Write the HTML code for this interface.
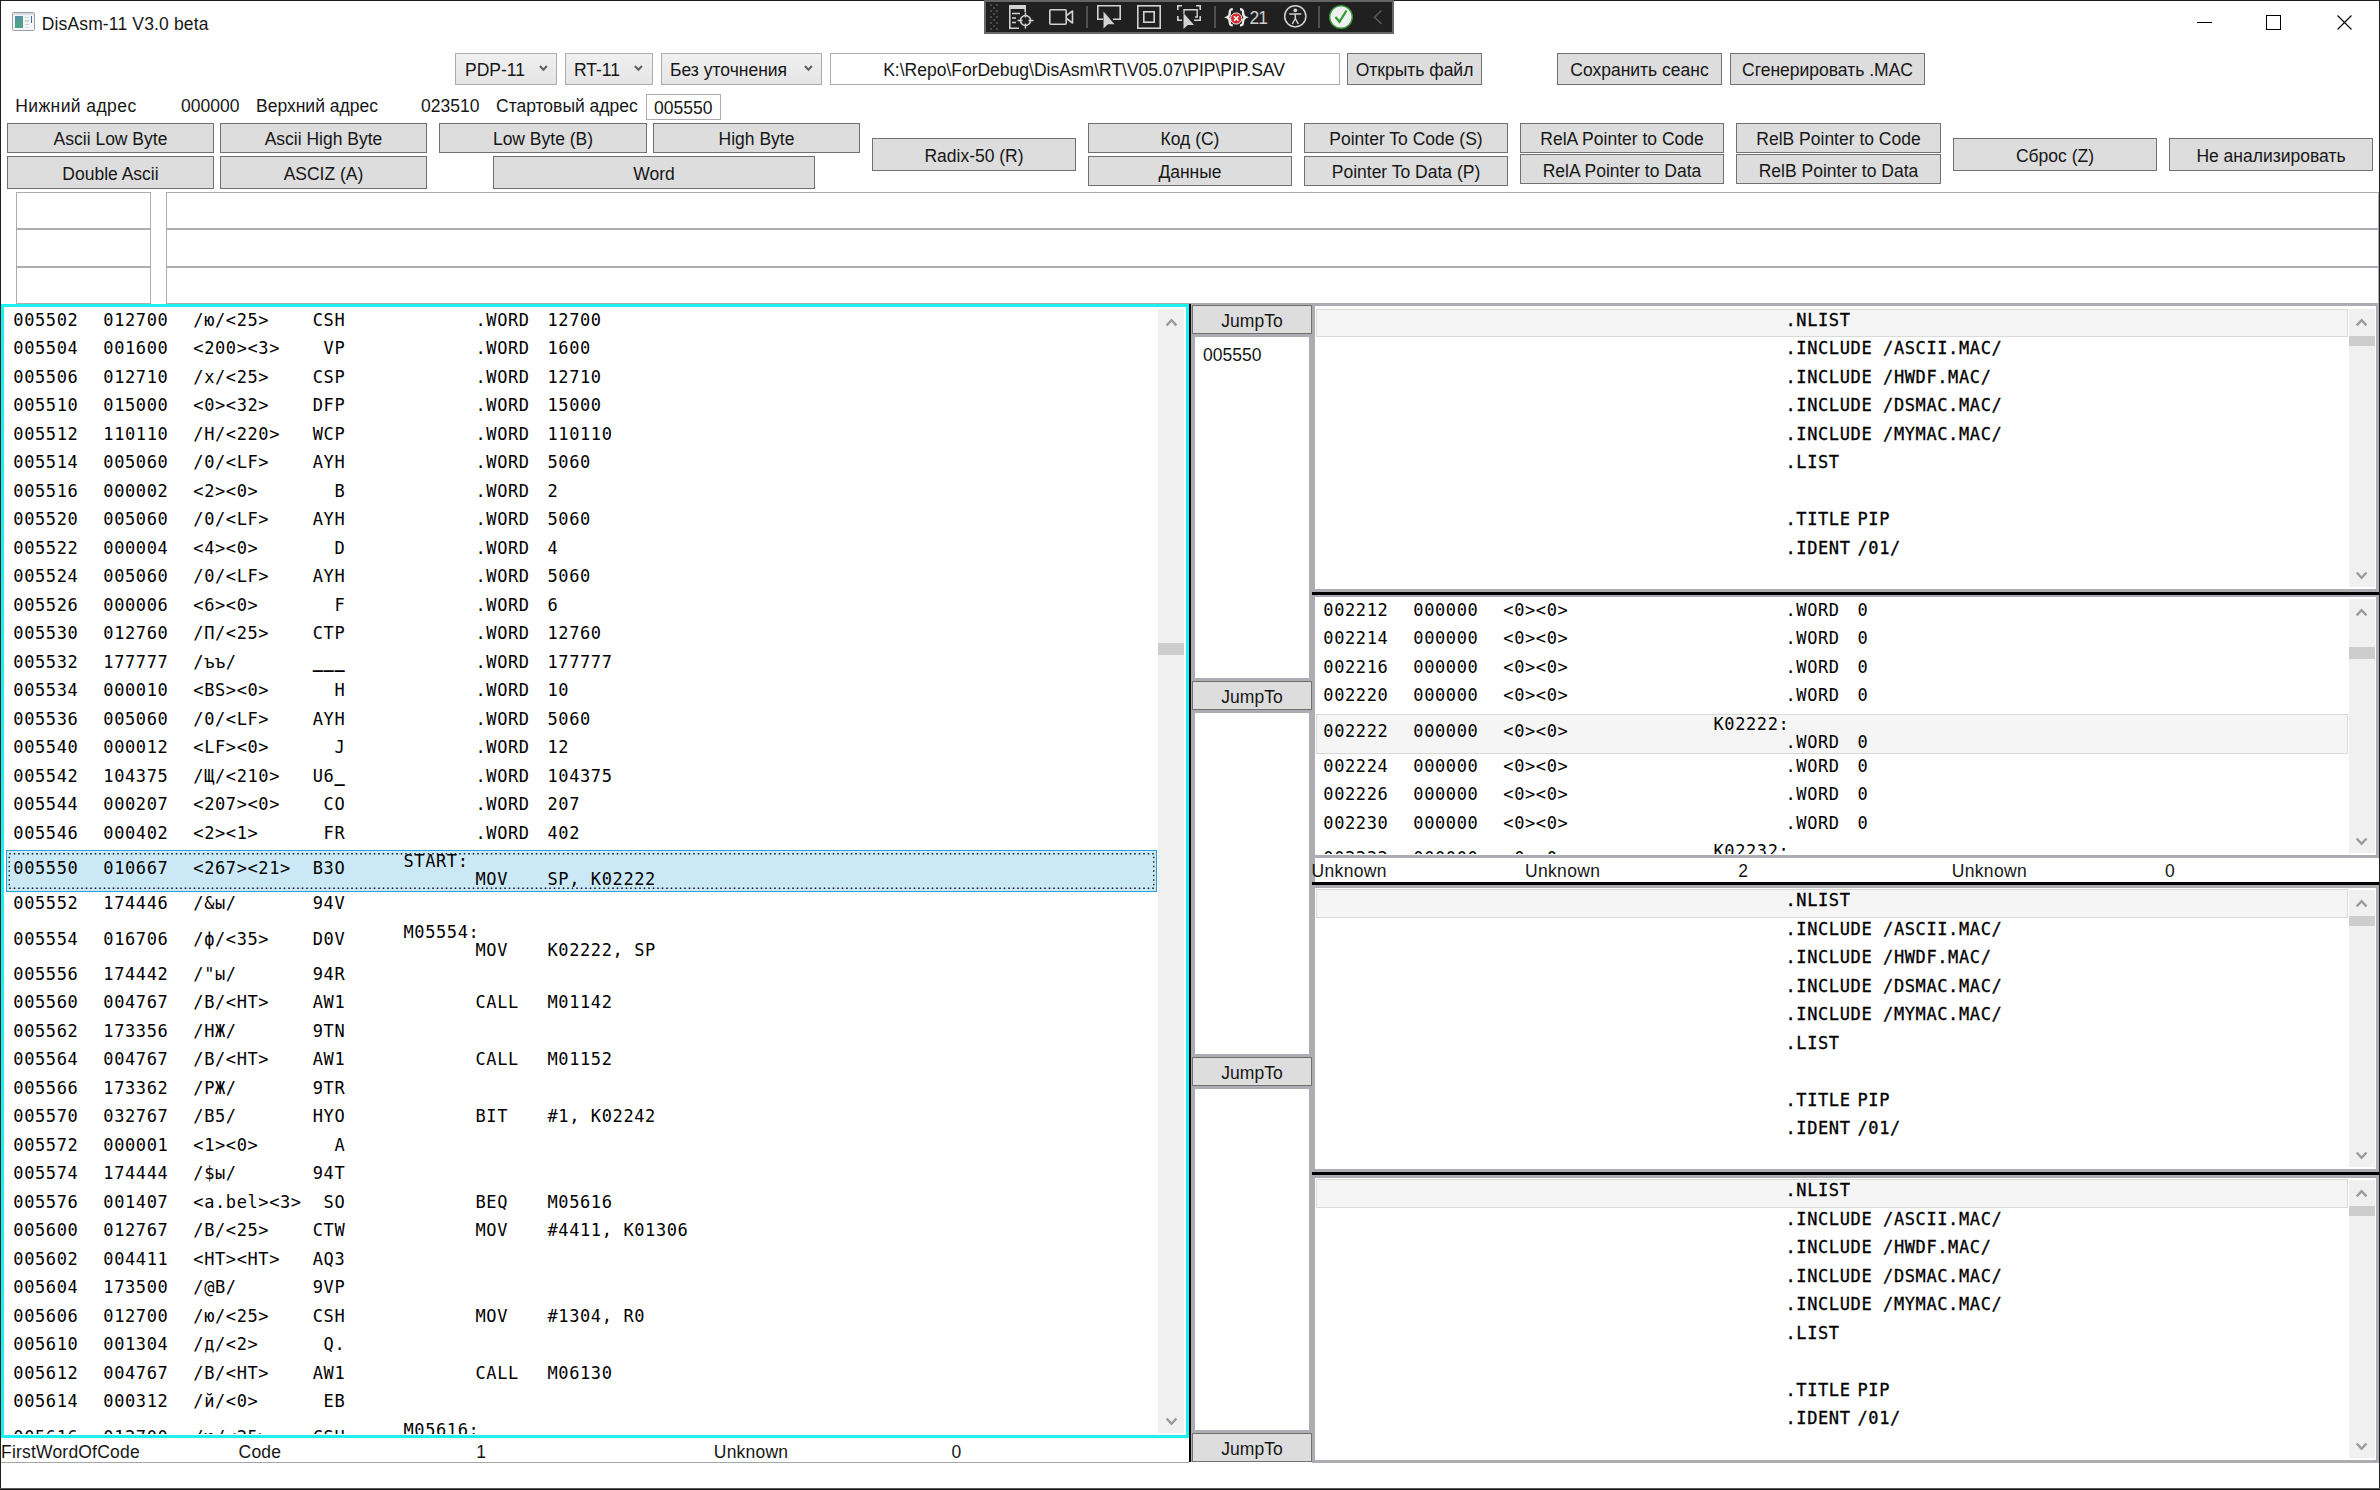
<!DOCTYPE html>
<html lang="ru"><head><meta charset="utf-8"><title>DisAsm-11 V3.0 beta</title>
<style>
html,body{margin:0;padding:0;overflow:hidden}
body{width:2380px;height:1490px;position:relative;overflow:hidden;background:#fff;font-family:"Liberation Sans",sans-serif;font-size:17.5px;color:#161616}
div,span{box-sizing:border-box}
.a{position:absolute}
.t{position:absolute;white-space:pre;line-height:20px;height:20px}
.m{color:#000;position:absolute;white-space:pre;line-height:20px;height:20px;font-family:"DejaVu Sans Mono","Liberation Mono",monospace;font-size:17px;letter-spacing:.606px}
.btn{position:absolute;border:1px solid #707070;background:#ddd;text-align:center;white-space:pre}
.btn span{position:absolute;left:0;right:0;line-height:20px;height:20px}
.tb{position:absolute;border:1px solid #abadb3;background:#fff}
.cb{position:absolute;border:1px solid #acacac;background:linear-gradient(#f0f0f0,#e5e5e5)}
.sb{position:absolute;background:#f0f0f0}
.th{position:absolute;background:#cdcdcd}
.g{position:absolute;background:#abadb3}
.k{position:absolute;background:#000}
.hl{position:absolute;background:#f5f5f5;border:1px solid #dadada}
svg{position:absolute;overflow:visible}
</style></head>
<body>
<div class="a" style="left:12px;top:12px;width:23px;height:19px;border:1px solid #9a9da1;border-radius:1.5px;background:#f4f5f6">
<div class="a" style="left:0;top:0;width:21px;height:2px;background:#d9dbde"></div>
<div class="a" style="left:1.5px;top:3px;width:8.5px;height:12px;background:linear-gradient(135deg,#5b86b4,#4f9f92 50%,#4fa279)"></div>
<div class="a" style="left:12px;top:3.5px;width:4px;height:1.5px;background:#d0d2d4"></div><div class="a" style="left:12px;top:7px;width:4px;height:1.5px;background:#d0d2d4"></div><div class="a" style="left:12px;top:10.5px;width:4px;height:1.5px;background:#d0d2d4"></div><div class="a" style="left:12px;top:13.5px;width:4px;height:1.5px;background:#dcdee0"></div>
<div class="a" style="left:17.5px;top:3px;width:1.5px;height:6.5px;background:#3f6fb0"></div>
</div>
<div class="t" style="left:41.7px;top:14px;letter-spacing:.15px">DisAsm-11 V3.0 beta</div>
<div class="k" style="left:2197px;top:22px;width:15px;height:1px;"></div>
<div class="a" style="left:2266px;top:15px;width:15px;height:15px;border:1px solid #000"></div>
<svg style="left:2337px;top:15px" width="15" height="15" viewBox="0 0 15 15"><path d="M0.5 0.5L14.5 14.5M14.5 0.5L0.5 14.5" stroke="#000" stroke-width="1.1" fill="none"/></svg>
<div class="a" style="left:984px;top:0;width:410px;height:34px;background:#202020;border:2px solid #686868;border-top-color:#5f5f5f"></div>
<svg style="left:984px;top:0" width="410" height="34" viewBox="984 0 410 34" fill="none" stroke="#d2d2d2" stroke-width="1.6">
<g stroke="none" fill="#4a4a4a"><path d="M990 4h2v2h-2zM996 4h2v2h-2zM993 7h2v2h-2zM990 10h2v2h-2zM996 10h2v2h-2zM993 13h2v2h-2zM990 16h2v2h-2zM996 16h2v2h-2zM993 19h2v2h-2zM990 22h2v2h-2zM996 22h2v2h-2zM993 25h2v2h-2zM990 28h2v2h-2zM996 28h2v2h-2z"/></g>
<g><path d="M1019 28.2H1009.8V5.8H1025.2V12" /><rect x="1010" y="6" width="15" height="3" fill="#d2d2d2" stroke="none"/><path d="M1012 13.5h8M1012 18h4M1012 22.5h4" stroke-width="1.5"/><circle cx="1025.5" cy="20.5" r="5"/><path d="M1025.5 12.5v5M1025.5 23.5v5M1017.5 20.5h5M1028.5 20.5h5" stroke-width="1.5"/></g>
<g><rect x="1049.8" y="9.8" width="16.4" height="14.4" rx="1"/><path d="M1066.5 15.5l6-4.5v12l-6-4.5" stroke-linejoin="round"/></g>
<path d="M1087 6v22M1215 6v22M1319 6v22" stroke="#4f4f4f" stroke-width="2"/>
<g><path d="M1103 19.2H1097.8V5.8H1120.2V19.2H1113"/><path d="M1103.5 11.5v17l4.5-4.2h6.5z" fill="#d2d2d2" stroke="none"/></g>
<g><rect x="1137.8" y="5.8" width="22.4" height="22.4"/><rect x="1143.8" y="11.8" width="10.4" height="10.4"/></g>
<g><path d="M1177.8 10V5.8H1182M1196 5.8h4.2V10M1200.200 16v4.2H1194M1182 20.2h-4.2V16" /><path d="M1184 13.5V9.800H1197.2V17H1195" stroke-width="1.4"/><path d="M1183.500 13v16l4.300-4h6.200z" fill="#d2d2d2" stroke="none"/></g>
<g><path d="M1232.800 9.200c-3 0-3 1.400-3 3.300s0 3.800-2.500 4.800c2.500 1 2.500 2.900 2.500 4.800s0 3.300 3 3.300M1240 9.200c3 0 3 1.400 3 3.300s0 3.800 2.500 4.800c-2.500 1-2.500 2.900-2.500 4.800s0 3.300-3 3.300" stroke="#ececec" stroke-width="2.400"/><circle cx="1236.2" cy="18.500" r="5.600" fill="#d42a2a" stroke="#f3f3f3" stroke-width="1"/><path d="M1234 16.300l4.400 4.400M1238.400 16.300l-4.400 4.400" stroke="#fff" stroke-width="1.600"/></g>
<g><circle cx="1295.3" cy="16.3" r="10.600" stroke-width="1.500"/><circle cx="1295.3" cy="10.300" r="1.900" fill="#d2d2d2" stroke="none"/><path d="M1289.300 14h12M1295.300 14v5M1295.300 18.500l-3 5.500M1295.300 18.500l3 5.500" stroke-width="1.500"/></g>
<g><circle cx="1341" cy="17" r="11.300" fill="#f0f0f0" stroke="#359a35" stroke-width="1.400"/><path d="M1335.500 17l4 4.800l7-11.300" stroke="#2f9a2f" stroke-width="2.200"/></g>
<path d="M1381.500 10.500l-7 6.700l7 6.700" stroke="#5a5a5a" stroke-width="1.500"/>
</svg>
<div class="t" style="left:1249.5px;top:8px;color:#cfcfcf;font-size:17.5px;letter-spacing:-.9px">21</div>
<div class="cb" style="left:455px;top:53px;width:102px;height:32px"></div>
<div class="t" style="left:465px;top:60px;">PDP-11</div>
<svg style="left:538.5px;top:64.5px" width="9" height="7" viewBox="0 0 9 7"><path d="M.9 1L4.400 4.800L7.900 1" stroke="#606060" stroke-width="2" fill="none"/></svg>
<div class="cb" style="left:565px;top:53px;width:88px;height:32px"></div>
<div class="t" style="left:574px;top:60px;">RT-11</div>
<svg style="left:634.2px;top:64.5px" width="9" height="7" viewBox="0 0 9 7"><path d="M.9 1L4.400 4.800L7.900 1" stroke="#606060" stroke-width="2" fill="none"/></svg>
<div class="cb" style="left:661px;top:53px;width:161px;height:32px"></div>
<div class="t" style="left:670px;top:60px;">Без уточнения</div>
<svg style="left:803.7px;top:64.5px" width="9" height="7" viewBox="0 0 9 7"><path d="M.9 1L4.400 4.800L7.900 1" stroke="#606060" stroke-width="2" fill="none"/></svg>
<div class="tb" style="left:830px;top:53px;width:510px;height:32px"></div>
<div class="t" style="left:830px;top:60px;width:510px;text-align:center;padding-right:2px">K:\Repo\ForDebug\DisAsm\RT\V05.07\PIP\PIP.SAV</div>
<div class="btn" style="left:1347px;top:53px;width:135px;height:32px"><span style="top:6px;padding-left:0px">Открыть файл</span></div>
<div class="btn" style="left:1557px;top:53px;width:165px;height:32px"><span style="top:6px;padding-left:0px">Сохранить сеанс</span></div>
<div class="btn" style="left:1730px;top:53px;width:195px;height:32px"><span style="top:6px;padding-left:0px">Сгенерировать .MAC</span></div>
<div class="t" style="left:15.2px;top:96px;letter-spacing:.42px">Нижний адрес</div>
<div class="t" style="left:181px;top:96px;">000000</div>
<div class="t" style="left:256px;top:96px;">Верхний адрес</div>
<div class="t" style="left:421px;top:96px;">023510</div>
<div class="t" style="left:496px;top:96px;">Стартовый адрес</div>
<div class="tb" style="left:646px;top:94px;width:75px;height:26px"></div>
<div class="t" style="left:654px;top:97.5px;">005550</div>
<div class="btn" style="left:7px;top:123px;width:207px;height:30px"><span style="top:5px;padding-left:0px">Ascii Low Byte</span></div>
<div class="btn" style="left:7px;top:156px;width:207px;height:33px"><span style="top:7px;padding-left:0px">Double Ascii</span></div>
<div class="btn" style="left:220px;top:123px;width:207px;height:30px"><span style="top:5px;padding-left:0px">Ascii High Byte</span></div>
<div class="btn" style="left:220px;top:156px;width:207px;height:33px"><span style="top:7px;padding-left:0px">ASCIZ (A)</span></div>
<div class="btn" style="left:439px;top:123px;width:208px;height:30px"><span style="top:5px;padding-left:0px">Low Byte (B)</span></div>
<div class="btn" style="left:653px;top:123px;width:207px;height:30px"><span style="top:5px;padding-left:0px">High Byte</span></div>
<div class="btn" style="left:493px;top:156px;width:322px;height:33px"><span style="top:7px;padding-left:0px">Word</span></div>
<div class="btn" style="left:872px;top:138px;width:204px;height:33px"><span style="top:7px;padding-left:0px">Radix-50 (R)</span></div>
<div class="btn" style="left:1088px;top:123px;width:204px;height:30px"><span style="top:5px;padding-left:0px">Код (C)</span></div>
<div class="btn" style="left:1088px;top:156px;width:204px;height:30px"><span style="top:5px;padding-left:0px">Данные</span></div>
<div class="btn" style="left:1304px;top:123px;width:204px;height:30px"><span style="top:5px;padding-left:0px">Pointer To Code (S)</span></div>
<div class="btn" style="left:1304px;top:156px;width:204px;height:30px"><span style="top:5px;padding-left:0px">Pointer To Data (P)</span></div>
<div class="btn" style="left:1520px;top:123px;width:204px;height:30px"><span style="top:5px;padding-left:0px">RelA Pointer to Code</span></div>
<div class="btn" style="left:1520px;top:154px;width:204px;height:30px"><span style="top:6px;padding-left:0px">RelA Pointer to Data</span></div>
<div class="btn" style="left:1736px;top:123px;width:205px;height:30px"><span style="top:5px;padding-left:0px">RelB Pointer to Code</span></div>
<div class="btn" style="left:1736px;top:154px;width:205px;height:30px"><span style="top:6px;padding-left:0px">RelB Pointer to Data</span></div>
<div class="btn" style="left:1953px;top:138px;width:204px;height:33px"><span style="top:7px;padding-left:0px">Сброс (Z)</span></div>
<div class="btn" style="left:2169px;top:138px;width:204px;height:33px"><span style="top:7px;padding-left:0px">Не анализировать</span></div>
<div class="tb" style="left:16px;top:192px;width:135px;height:37px"></div>
<div class="tb" style="left:166px;top:192px;width:2213px;height:37px"></div>
<div class="tb" style="left:16px;top:229px;width:135px;height:38px"></div>
<div class="tb" style="left:166px;top:229px;width:2213px;height:38px"></div>
<div class="tb" style="left:16px;top:267px;width:135px;height:37px"></div>
<div class="tb" style="left:166px;top:267px;width:2213px;height:37px"></div>
<div class="a" style="left:1px;top:304px;width:1188px;height:1134px;border:3px solid #1cf0f0;background:#fff"></div>
<div class="a" style="left:0;top:0;width:2380px;height:1434px;overflow:hidden;">
<div class="m" style="left:13.3px;top:310px;">005502</div>
<div class="m" style="left:103.3px;top:310px;">012700</div>
<div class="m" style="left:193.3px;top:310px;">/ю/&lt;25&gt;</div>
<div class="m" style="left:245px;width:100.3px;text-align:right;top:310px">CSH</div>
<div class="m" style="left:475.5px;top:310px;">.WORD</div>
<div class="m" style="left:547.5px;top:310px;">12700</div>
<div class="m" style="left:13.3px;top:338px;">005504</div>
<div class="m" style="left:103.3px;top:338px;">001600</div>
<div class="m" style="left:193.3px;top:338px;">&lt;200&gt;&lt;3&gt;</div>
<div class="m" style="left:245px;width:100.3px;text-align:right;top:338px">VP</div>
<div class="m" style="left:475.5px;top:338px;">.WORD</div>
<div class="m" style="left:547.5px;top:338px;">1600</div>
<div class="m" style="left:13.3px;top:367px;">005506</div>
<div class="m" style="left:103.3px;top:367px;">012710</div>
<div class="m" style="left:193.3px;top:367px;">/х/&lt;25&gt;</div>
<div class="m" style="left:245px;width:100.3px;text-align:right;top:367px">CSP</div>
<div class="m" style="left:475.5px;top:367px;">.WORD</div>
<div class="m" style="left:547.5px;top:367px;">12710</div>
<div class="m" style="left:13.3px;top:395px;">005510</div>
<div class="m" style="left:103.3px;top:395px;">015000</div>
<div class="m" style="left:193.3px;top:395px;">&lt;0&gt;&lt;32&gt;</div>
<div class="m" style="left:245px;width:100.3px;text-align:right;top:395px">DFP</div>
<div class="m" style="left:475.5px;top:395px;">.WORD</div>
<div class="m" style="left:547.5px;top:395px;">15000</div>
<div class="m" style="left:13.3px;top:424px;">005512</div>
<div class="m" style="left:103.3px;top:424px;">110110</div>
<div class="m" style="left:193.3px;top:424px;">/Н/&lt;220&gt;</div>
<div class="m" style="left:245px;width:100.3px;text-align:right;top:424px">WCP</div>
<div class="m" style="left:475.5px;top:424px;">.WORD</div>
<div class="m" style="left:547.5px;top:424px;">110110</div>
<div class="m" style="left:13.3px;top:452px;">005514</div>
<div class="m" style="left:103.3px;top:452px;">005060</div>
<div class="m" style="left:193.3px;top:452px;">/0/&lt;LF&gt;</div>
<div class="m" style="left:245px;width:100.3px;text-align:right;top:452px">AYH</div>
<div class="m" style="left:475.5px;top:452px;">.WORD</div>
<div class="m" style="left:547.5px;top:452px;">5060</div>
<div class="m" style="left:13.3px;top:481px;">005516</div>
<div class="m" style="left:103.3px;top:481px;">000002</div>
<div class="m" style="left:193.3px;top:481px;">&lt;2&gt;&lt;0&gt;</div>
<div class="m" style="left:245px;width:100.3px;text-align:right;top:481px">B</div>
<div class="m" style="left:475.5px;top:481px;">.WORD</div>
<div class="m" style="left:547.5px;top:481px;">2</div>
<div class="m" style="left:13.3px;top:509px;">005520</div>
<div class="m" style="left:103.3px;top:509px;">005060</div>
<div class="m" style="left:193.3px;top:509px;">/0/&lt;LF&gt;</div>
<div class="m" style="left:245px;width:100.3px;text-align:right;top:509px">AYH</div>
<div class="m" style="left:475.5px;top:509px;">.WORD</div>
<div class="m" style="left:547.5px;top:509px;">5060</div>
<div class="m" style="left:13.3px;top:538px;">005522</div>
<div class="m" style="left:103.3px;top:538px;">000004</div>
<div class="m" style="left:193.3px;top:538px;">&lt;4&gt;&lt;0&gt;</div>
<div class="m" style="left:245px;width:100.3px;text-align:right;top:538px">D</div>
<div class="m" style="left:475.5px;top:538px;">.WORD</div>
<div class="m" style="left:547.5px;top:538px;">4</div>
<div class="m" style="left:13.3px;top:566px;">005524</div>
<div class="m" style="left:103.3px;top:566px;">005060</div>
<div class="m" style="left:193.3px;top:566px;">/0/&lt;LF&gt;</div>
<div class="m" style="left:245px;width:100.3px;text-align:right;top:566px">AYH</div>
<div class="m" style="left:475.5px;top:566px;">.WORD</div>
<div class="m" style="left:547.5px;top:566px;">5060</div>
<div class="m" style="left:13.3px;top:595px;">005526</div>
<div class="m" style="left:103.3px;top:595px;">000006</div>
<div class="m" style="left:193.3px;top:595px;">&lt;6&gt;&lt;0&gt;</div>
<div class="m" style="left:245px;width:100.3px;text-align:right;top:595px">F</div>
<div class="m" style="left:475.5px;top:595px;">.WORD</div>
<div class="m" style="left:547.5px;top:595px;">6</div>
<div class="m" style="left:13.3px;top:623px;">005530</div>
<div class="m" style="left:103.3px;top:623px;">012760</div>
<div class="m" style="left:193.3px;top:623px;">/П/&lt;25&gt;</div>
<div class="m" style="left:245px;width:100.3px;text-align:right;top:623px">CTP</div>
<div class="m" style="left:475.5px;top:623px;">.WORD</div>
<div class="m" style="left:547.5px;top:623px;">12760</div>
<div class="m" style="left:13.3px;top:652px;">005532</div>
<div class="m" style="left:103.3px;top:652px;">177777</div>
<div class="m" style="left:193.3px;top:652px;">/ъъ/</div>
<div class="m" style="left:245px;width:100.3px;text-align:right;top:652px"><b>___</b></div>
<div class="m" style="left:475.5px;top:652px;">.WORD</div>
<div class="m" style="left:547.5px;top:652px;">177777</div>
<div class="m" style="left:13.3px;top:680px;">005534</div>
<div class="m" style="left:103.3px;top:680px;">000010</div>
<div class="m" style="left:193.3px;top:680px;">&lt;BS&gt;&lt;0&gt;</div>
<div class="m" style="left:245px;width:100.3px;text-align:right;top:680px">H</div>
<div class="m" style="left:475.5px;top:680px;">.WORD</div>
<div class="m" style="left:547.5px;top:680px;">10</div>
<div class="m" style="left:13.3px;top:709px;">005536</div>
<div class="m" style="left:103.3px;top:709px;">005060</div>
<div class="m" style="left:193.3px;top:709px;">/0/&lt;LF&gt;</div>
<div class="m" style="left:245px;width:100.3px;text-align:right;top:709px">AYH</div>
<div class="m" style="left:475.5px;top:709px;">.WORD</div>
<div class="m" style="left:547.5px;top:709px;">5060</div>
<div class="m" style="left:13.3px;top:737px;">005540</div>
<div class="m" style="left:103.3px;top:737px;">000012</div>
<div class="m" style="left:193.3px;top:737px;">&lt;LF&gt;&lt;0&gt;</div>
<div class="m" style="left:245px;width:100.3px;text-align:right;top:737px">J</div>
<div class="m" style="left:475.5px;top:737px;">.WORD</div>
<div class="m" style="left:547.5px;top:737px;">12</div>
<div class="m" style="left:13.3px;top:766px;">005542</div>
<div class="m" style="left:103.3px;top:766px;">104375</div>
<div class="m" style="left:193.3px;top:766px;">/Щ/&lt;210&gt;</div>
<div class="m" style="left:245px;width:100.3px;text-align:right;top:766px">U6<b>_</b></div>
<div class="m" style="left:475.5px;top:766px;">.WORD</div>
<div class="m" style="left:547.5px;top:766px;">104375</div>
<div class="m" style="left:13.3px;top:794px;">005544</div>
<div class="m" style="left:103.3px;top:794px;">000207</div>
<div class="m" style="left:193.3px;top:794px;">&lt;207&gt;&lt;0&gt;</div>
<div class="m" style="left:245px;width:100.3px;text-align:right;top:794px">CO</div>
<div class="m" style="left:475.5px;top:794px;">.WORD</div>
<div class="m" style="left:547.5px;top:794px;">207</div>
<div class="m" style="left:13.3px;top:823px;">005546</div>
<div class="m" style="left:103.3px;top:823px;">000402</div>
<div class="m" style="left:193.3px;top:823px;">&lt;2&gt;&lt;1&gt;</div>
<div class="m" style="left:245px;width:100.3px;text-align:right;top:823px">FR</div>
<div class="m" style="left:475.5px;top:823px;">.WORD</div>
<div class="m" style="left:547.5px;top:823px;">402</div>
<div class="a" style="left:6px;top:850px;width:1151px;height:42px;background:#cbe8f6;border:1px solid #26a0da"></div>
<svg style="left:6px;top:850px" width="1151" height="42" viewBox="0 0 1151 42"><rect x="3.250" y="3.750" width="1144.5" height="34.500" fill="none" stroke="#111" stroke-width="1.300" stroke-dasharray="1.500 3"/></svg>
<div class="m" style="left:13.3px;top:858px;">005550</div>
<div class="m" style="left:103.3px;top:858px;">010667</div>
<div class="m" style="left:193.3px;top:858px;">&lt;267&gt;&lt;21&gt;</div>
<div class="m" style="left:245px;width:100.3px;text-align:right;top:858px">B3O</div>
<div class="m" style="left:403.5px;top:851px;">START:</div>
<div class="m" style="left:475.5px;top:869px;">MOV</div>
<div class="m" style="left:547.5px;top:869px;">SP, K02222</div>
<div class="m" style="left:13.3px;top:893px;">005552</div>
<div class="m" style="left:103.3px;top:893px;">174446</div>
<div class="m" style="left:193.3px;top:893px;">/&amp;ы/</div>
<div class="m" style="left:245px;width:100.3px;text-align:right;top:893px">94V</div>
<div class="m" style="left:13.3px;top:929px;">005554</div>
<div class="m" style="left:103.3px;top:929px;">016706</div>
<div class="m" style="left:193.3px;top:929px;">/ф/&lt;35&gt;</div>
<div class="m" style="left:245px;width:100.3px;text-align:right;top:929px">D0V</div>
<div class="m" style="left:403.5px;top:922px;">M05554:</div>
<div class="m" style="left:475.5px;top:940px;">MOV</div>
<div class="m" style="left:547.5px;top:940px;">K02222, SP</div>
<div class="m" style="left:13.3px;top:964px;">005556</div>
<div class="m" style="left:103.3px;top:964px;">174442</div>
<div class="m" style="left:193.3px;top:964px;">/"ы/</div>
<div class="m" style="left:245px;width:100.3px;text-align:right;top:964px">94R</div>
<div class="m" style="left:13.3px;top:992px;">005560</div>
<div class="m" style="left:103.3px;top:992px;">004767</div>
<div class="m" style="left:193.3px;top:992px;">/В/&lt;HT&gt;</div>
<div class="m" style="left:245px;width:100.3px;text-align:right;top:992px">AW1</div>
<div class="m" style="left:475.5px;top:992px;">CALL</div>
<div class="m" style="left:547.5px;top:992px;">M01142</div>
<div class="m" style="left:13.3px;top:1021px;">005562</div>
<div class="m" style="left:103.3px;top:1021px;">173356</div>
<div class="m" style="left:193.3px;top:1021px;">/НЖ/</div>
<div class="m" style="left:245px;width:100.3px;text-align:right;top:1021px">9TN</div>
<div class="m" style="left:13.3px;top:1049px;">005564</div>
<div class="m" style="left:103.3px;top:1049px;">004767</div>
<div class="m" style="left:193.3px;top:1049px;">/В/&lt;HT&gt;</div>
<div class="m" style="left:245px;width:100.3px;text-align:right;top:1049px">AW1</div>
<div class="m" style="left:475.5px;top:1049px;">CALL</div>
<div class="m" style="left:547.5px;top:1049px;">M01152</div>
<div class="m" style="left:13.3px;top:1078px;">005566</div>
<div class="m" style="left:103.3px;top:1078px;">173362</div>
<div class="m" style="left:193.3px;top:1078px;">/РЖ/</div>
<div class="m" style="left:245px;width:100.3px;text-align:right;top:1078px">9TR</div>
<div class="m" style="left:13.3px;top:1106px;">005570</div>
<div class="m" style="left:103.3px;top:1106px;">032767</div>
<div class="m" style="left:193.3px;top:1106px;">/В5/</div>
<div class="m" style="left:245px;width:100.3px;text-align:right;top:1106px">HYO</div>
<div class="m" style="left:475.5px;top:1106px;">BIT</div>
<div class="m" style="left:547.5px;top:1106px;">#1, K02242</div>
<div class="m" style="left:13.3px;top:1135px;">005572</div>
<div class="m" style="left:103.3px;top:1135px;">000001</div>
<div class="m" style="left:193.3px;top:1135px;">&lt;1&gt;&lt;0&gt;</div>
<div class="m" style="left:245px;width:100.3px;text-align:right;top:1135px">A</div>
<div class="m" style="left:13.3px;top:1163px;">005574</div>
<div class="m" style="left:103.3px;top:1163px;">174444</div>
<div class="m" style="left:193.3px;top:1163px;">/$ы/</div>
<div class="m" style="left:245px;width:100.3px;text-align:right;top:1163px">94T</div>
<div class="m" style="left:13.3px;top:1192px;">005576</div>
<div class="m" style="left:103.3px;top:1192px;">001407</div>
<div class="m" style="left:193.3px;top:1192px;">&lt;a.bel&gt;&lt;3&gt;</div>
<div class="m" style="left:245px;width:100.3px;text-align:right;top:1192px">SO</div>
<div class="m" style="left:475.5px;top:1192px;">BEQ</div>
<div class="m" style="left:547.5px;top:1192px;">M05616</div>
<div class="m" style="left:13.3px;top:1220px;">005600</div>
<div class="m" style="left:103.3px;top:1220px;">012767</div>
<div class="m" style="left:193.3px;top:1220px;">/В/&lt;25&gt;</div>
<div class="m" style="left:245px;width:100.3px;text-align:right;top:1220px">CTW</div>
<div class="m" style="left:475.5px;top:1220px;">MOV</div>
<div class="m" style="left:547.5px;top:1220px;">#4411, K01306</div>
<div class="m" style="left:13.3px;top:1249px;">005602</div>
<div class="m" style="left:103.3px;top:1249px;">004411</div>
<div class="m" style="left:193.3px;top:1249px;">&lt;HT&gt;&lt;HT&gt;</div>
<div class="m" style="left:245px;width:100.3px;text-align:right;top:1249px">AQ3</div>
<div class="m" style="left:13.3px;top:1277px;">005604</div>
<div class="m" style="left:103.3px;top:1277px;">173500</div>
<div class="m" style="left:193.3px;top:1277px;">/@В/</div>
<div class="m" style="left:245px;width:100.3px;text-align:right;top:1277px">9VP</div>
<div class="m" style="left:13.3px;top:1306px;">005606</div>
<div class="m" style="left:103.3px;top:1306px;">012700</div>
<div class="m" style="left:193.3px;top:1306px;">/ю/&lt;25&gt;</div>
<div class="m" style="left:245px;width:100.3px;text-align:right;top:1306px">CSH</div>
<div class="m" style="left:475.5px;top:1306px;">MOV</div>
<div class="m" style="left:547.5px;top:1306px;">#1304, R0</div>
<div class="m" style="left:13.3px;top:1334px;">005610</div>
<div class="m" style="left:103.3px;top:1334px;">001304</div>
<div class="m" style="left:193.3px;top:1334px;">/д/&lt;2&gt;</div>
<div class="m" style="left:245px;width:100.3px;text-align:right;top:1334px">Q.</div>
<div class="m" style="left:13.3px;top:1363px;">005612</div>
<div class="m" style="left:103.3px;top:1363px;">004767</div>
<div class="m" style="left:193.3px;top:1363px;">/В/&lt;HT&gt;</div>
<div class="m" style="left:245px;width:100.3px;text-align:right;top:1363px">AW1</div>
<div class="m" style="left:475.5px;top:1363px;">CALL</div>
<div class="m" style="left:547.5px;top:1363px;">M06130</div>
<div class="m" style="left:13.3px;top:1391px;">005614</div>
<div class="m" style="left:103.3px;top:1391px;">000312</div>
<div class="m" style="left:193.3px;top:1391px;">/й/&lt;0&gt;</div>
<div class="m" style="left:245px;width:100.3px;text-align:right;top:1391px">EB</div>
<div class="m" style="left:13.3px;top:1427px;">005616</div>
<div class="m" style="left:103.3px;top:1427px;">012700</div>
<div class="m" style="left:193.3px;top:1427px;">/ю/&lt;25&gt;</div>
<div class="m" style="left:245px;width:100.3px;text-align:right;top:1427px">CSH</div>
<div class="m" style="left:403.5px;top:1420px;">M05616:</div>
<div class="m" style="left:475.5px;top:1438px;">MOV</div>
<div class="m" style="left:547.5px;top:1438px;">#1304, R0</div>
</div>
<div class="sb" style="left:1158px;top:309px;width:26px;height:1124px;"></div>
<div class="th" style="left:1158px;top:643px;width:26px;height:12px;"></div>
<svg style="left:1158px;top:309px" width="26" height="26" viewBox="0 0 26 26"><path d="M8.6 16.400L13.5 11.200L18.4 16.400" stroke="#9a9a9a" stroke-width="2.300" fill="none"/></svg>
<svg style="left:1158px;top:1407px" width="26" height="26" viewBox="0 0 26 26"><path d="M8.6 11.400L13.5 16.800L18.4 11.400" stroke="#9a9a9a" stroke-width="2.300" fill="none"/></svg>
<div class="t" style="left:1.0px;top:1442px;letter-spacing:.2px">FirstWordOfCode</div>
<div class="t" style="left:238.6px;top:1442px;letter-spacing:.2px">Code</div>
<div class="t" style="left:476.2px;top:1442px;letter-spacing:.2px">1</div>
<div class="t" style="left:713.8px;top:1442px;letter-spacing:.2px">Unknown</div>
<div class="t" style="left:951.4px;top:1442px;letter-spacing:.2px">0</div>
<div class="a" style="left:1px;top:1462px;width:1188px;height:1px;background:#a6a6a6"></div>
<div class="k" style="left:1189px;top:304px;width:2px;height:1158px;"></div>
<div class="g" style="left:1191px;top:303px;width:124px;height:1159px;"></div>
<div class="btn" style="left:1192px;top:305px;width:120px;height:29px"><span style="top:5px;padding-left:0px">JumpTo</span></div>
<div class="a" style="left:1195px;top:337px;width:114px;height:341px;background:#fff"></div>
<div class="btn" style="left:1192px;top:681px;width:120px;height:29px"><span style="top:5px;padding-left:0px">JumpTo</span></div>
<div class="a" style="left:1195px;top:713px;width:114px;height:341px;background:#fff"></div>
<div class="btn" style="left:1192px;top:1057px;width:120px;height:29px"><span style="top:5px;padding-left:0px">JumpTo</span></div>
<div class="a" style="left:1195px;top:1089px;width:114px;height:341px;background:#fff"></div>
<div class="btn" style="left:1192px;top:1433px;width:120px;height:29px"><span style="top:5px;padding-left:0px">JumpTo</span></div>
<div class="t" style="left:1203px;top:345px;">005550</div>
<div class="a" style="left:1312px;top:303px;width:1067px;height:289px;border:3px solid #abadb3;background:#fff"></div>
<div class="a" style="left:0;top:0;width:2380px;height:588px;overflow:hidden;-webkit-text-stroke:.3px #000;">
<div class="hl" style="left:1316px;top:309px;width:1032px;height:28px"></div>
<div class="m" style="left:1785.5px;top:310px;">.NLIST</div>
<div class="m" style="left:1785.5px;top:338px;">.INCLUDE /ASCII.MAC/</div>
<div class="m" style="left:1785.5px;top:367px;">.INCLUDE /HWDF.MAC/</div>
<div class="m" style="left:1785.5px;top:395px;">.INCLUDE /DSMAC.MAC/</div>
<div class="m" style="left:1785.5px;top:424px;">.INCLUDE /MYMAC.MAC/</div>
<div class="m" style="left:1785.5px;top:452px;">.LIST</div>
<div class="m" style="left:1785.5px;top:509px;">.TITLE</div>
<div class="m" style="left:1857.5px;top:509px;">PIP</div>
<div class="m" style="left:1785.5px;top:538px;">.IDENT</div>
<div class="m" style="left:1857.5px;top:538px;">/01/</div>
</div>
<div class="sb" style="left:2349px;top:309px;width:26px;height:278px;"></div>
<div class="th" style="left:2349px;top:336px;width:26px;height:10px;"></div>
<svg style="left:2349px;top:309px" width="26" height="26" viewBox="0 0 26 26"><path d="M7.7 16.400L12.6 11.200L17.5 16.400" stroke="#9a9a9a" stroke-width="2.300" fill="none"/></svg>
<svg style="left:2349px;top:561px" width="26" height="26" viewBox="0 0 26 26"><path d="M7.7 11.400L12.6 16.800L17.5 11.400" stroke="#9a9a9a" stroke-width="2.300" fill="none"/></svg>
<div class="k" style="left:1312px;top:592px;width:1067px;height:2px;height:3px"></div>
<div class="a" style="left:1312px;top:594px;width:1067px;height:264px;border:3px solid #abadb3;background:#fff"></div>
<div class="k" style="left:1312px;top:592px;width:1067px;height:3px;"></div>
<div class="a" style="left:0;top:0;width:2380px;height:854px;overflow:hidden;">
<div class="m" style="left:1323.3px;top:600px;">002212</div>
<div class="m" style="left:1413.3px;top:600px;">000000</div>
<div class="m" style="left:1503.3px;top:600px;">&lt;0&gt;&lt;0&gt;</div>
<div class="m" style="left:1785.5px;top:600px;">.WORD</div>
<div class="m" style="left:1857.5px;top:600px;">0</div>
<div class="m" style="left:1323.3px;top:628px;">002214</div>
<div class="m" style="left:1413.3px;top:628px;">000000</div>
<div class="m" style="left:1503.3px;top:628px;">&lt;0&gt;&lt;0&gt;</div>
<div class="m" style="left:1785.5px;top:628px;">.WORD</div>
<div class="m" style="left:1857.5px;top:628px;">0</div>
<div class="m" style="left:1323.3px;top:657px;">002216</div>
<div class="m" style="left:1413.3px;top:657px;">000000</div>
<div class="m" style="left:1503.3px;top:657px;">&lt;0&gt;&lt;0&gt;</div>
<div class="m" style="left:1785.5px;top:657px;">.WORD</div>
<div class="m" style="left:1857.5px;top:657px;">0</div>
<div class="m" style="left:1323.3px;top:685px;">002220</div>
<div class="m" style="left:1413.3px;top:685px;">000000</div>
<div class="m" style="left:1503.3px;top:685px;">&lt;0&gt;&lt;0&gt;</div>
<div class="m" style="left:1785.5px;top:685px;">.WORD</div>
<div class="m" style="left:1857.5px;top:685px;">0</div>
<div class="hl" style="left:1316px;top:714px;width:1032px;height:40px"></div>
<div class="m" style="left:1323.3px;top:721px;">002222</div>
<div class="m" style="left:1413.3px;top:721px;">000000</div>
<div class="m" style="left:1503.3px;top:721px;">&lt;0&gt;&lt;0&gt;</div>
<div class="m" style="left:1713.5px;top:714px;">K02222:</div>
<div class="m" style="left:1785.5px;top:732px;">.WORD</div>
<div class="m" style="left:1857.5px;top:732px;">0</div>
<div class="m" style="left:1323.3px;top:756px;">002224</div>
<div class="m" style="left:1413.3px;top:756px;">000000</div>
<div class="m" style="left:1503.3px;top:756px;">&lt;0&gt;&lt;0&gt;</div>
<div class="m" style="left:1785.5px;top:756px;">.WORD</div>
<div class="m" style="left:1857.5px;top:756px;">0</div>
<div class="m" style="left:1323.3px;top:784px;">002226</div>
<div class="m" style="left:1413.3px;top:784px;">000000</div>
<div class="m" style="left:1503.3px;top:784px;">&lt;0&gt;&lt;0&gt;</div>
<div class="m" style="left:1785.5px;top:784px;">.WORD</div>
<div class="m" style="left:1857.5px;top:784px;">0</div>
<div class="m" style="left:1323.3px;top:813px;">002230</div>
<div class="m" style="left:1413.3px;top:813px;">000000</div>
<div class="m" style="left:1503.3px;top:813px;">&lt;0&gt;&lt;0&gt;</div>
<div class="m" style="left:1785.5px;top:813px;">.WORD</div>
<div class="m" style="left:1857.5px;top:813px;">0</div>
<div class="m" style="left:1323.3px;top:848px;">002232</div>
<div class="m" style="left:1413.3px;top:848px;">000000</div>
<div class="m" style="left:1503.3px;top:848px;">&lt;0&gt;&lt;0&gt;</div>
<div class="m" style="left:1713.5px;top:841px;">K02232:</div>
<div class="m" style="left:1785.5px;top:859px;">.WORD</div>
<div class="m" style="left:1857.5px;top:859px;">0</div>
</div>
<div class="sb" style="left:2349px;top:599px;width:26px;height:254px;"></div>
<div class="th" style="left:2349px;top:647px;width:26px;height:12px;"></div>
<svg style="left:2349px;top:599px" width="26" height="26" viewBox="0 0 26 26"><path d="M7.7 16.400L12.6 11.200L17.5 16.400" stroke="#9a9a9a" stroke-width="2.300" fill="none"/></svg>
<svg style="left:2349px;top:827px" width="26" height="26" viewBox="0 0 26 26"><path d="M7.7 11.400L12.6 16.800L17.5 11.400" stroke="#9a9a9a" stroke-width="2.300" fill="none"/></svg>
<div class="t" style="left:1311.5px;top:861px;letter-spacing:.35px">Unknown</div>
<div class="t" style="left:1524.9px;top:861px;letter-spacing:.35px">Unknown</div>
<div class="t" style="left:1738.3px;top:861px;letter-spacing:.35px">2</div>
<div class="t" style="left:1951.7px;top:861px;letter-spacing:.35px">Unknown</div>
<div class="t" style="left:2165.1px;top:861px;letter-spacing:.35px">0</div>
<div class="k" style="left:1312px;top:882px;width:1067px;height:3px;"></div>
<div class="a" style="left:1312px;top:885px;width:1067px;height:287px;border:3px solid #abadb3;background:#fff"></div>
<div class="a" style="left:0;top:0;width:2380px;height:1169px;overflow:hidden;-webkit-text-stroke:.3px #000;">
<div class="hl" style="left:1316px;top:889px;width:1032px;height:29px"></div>
<div class="m" style="left:1785.5px;top:890px;">.NLIST</div>
<div class="m" style="left:1785.5px;top:919px;">.INCLUDE /ASCII.MAC/</div>
<div class="m" style="left:1785.5px;top:947px;">.INCLUDE /HWDF.MAC/</div>
<div class="m" style="left:1785.5px;top:976px;">.INCLUDE /DSMAC.MAC/</div>
<div class="m" style="left:1785.5px;top:1004px;">.INCLUDE /MYMAC.MAC/</div>
<div class="m" style="left:1785.5px;top:1033px;">.LIST</div>
<div class="m" style="left:1785.5px;top:1090px;">.TITLE</div>
<div class="m" style="left:1857.5px;top:1090px;">PIP</div>
<div class="m" style="left:1785.5px;top:1118px;">.IDENT</div>
<div class="m" style="left:1857.5px;top:1118px;">/01/</div>
</div>
<div class="sb" style="left:2349px;top:889.5px;width:26px;height:277.5px;"></div>
<div class="th" style="left:2349px;top:916px;width:26px;height:10px;"></div>
<svg style="left:2349px;top:889.5px" width="26" height="26" viewBox="0 0 26 26"><path d="M7.7 16.400L12.6 11.200L17.5 16.400" stroke="#9a9a9a" stroke-width="2.300" fill="none"/></svg>
<svg style="left:2349px;top:1141px" width="26" height="26" viewBox="0 0 26 26"><path d="M7.7 11.400L12.6 16.800L17.5 11.400" stroke="#9a9a9a" stroke-width="2.300" fill="none"/></svg>
<div class="k" style="left:1312px;top:1172px;width:1067px;height:3px;"></div>
<div class="a" style="left:1312px;top:1175px;width:1067px;height:288px;border:3px solid #abadb3;background:#fff"></div>
<div class="a" style="left:0;top:0;width:2380px;height:1460px;overflow:hidden;-webkit-text-stroke:.3px #000;">
<div class="hl" style="left:1316px;top:1179px;width:1032px;height:29px"></div>
<div class="m" style="left:1785.5px;top:1180px;">.NLIST</div>
<div class="m" style="left:1785.5px;top:1209px;">.INCLUDE /ASCII.MAC/</div>
<div class="m" style="left:1785.5px;top:1237px;">.INCLUDE /HWDF.MAC/</div>
<div class="m" style="left:1785.5px;top:1266px;">.INCLUDE /DSMAC.MAC/</div>
<div class="m" style="left:1785.5px;top:1294px;">.INCLUDE /MYMAC.MAC/</div>
<div class="m" style="left:1785.5px;top:1323px;">.LIST</div>
<div class="m" style="left:1785.5px;top:1380px;">.TITLE</div>
<div class="m" style="left:1857.5px;top:1380px;">PIP</div>
<div class="m" style="left:1785.5px;top:1408px;">.IDENT</div>
<div class="m" style="left:1857.5px;top:1408px;">/01/</div>
</div>
<div class="sb" style="left:2349px;top:1180px;width:26px;height:278px;"></div>
<div class="th" style="left:2349px;top:1206px;width:26px;height:10px;"></div>
<svg style="left:2349px;top:1180px" width="26" height="26" viewBox="0 0 26 26"><path d="M7.7 16.400L12.6 11.200L17.5 16.400" stroke="#9a9a9a" stroke-width="2.300" fill="none"/></svg>
<svg style="left:2349px;top:1432px" width="26" height="26" viewBox="0 0 26 26"><path d="M7.7 11.400L12.6 16.800L17.5 11.400" stroke="#9a9a9a" stroke-width="2.300" fill="none"/></svg>
<div class="a" style="left:0px;top:0px;width:2380px;height:1px;background:#1f1f1f"></div>
<div class="a" style="left:0px;top:0px;width:1px;height:1490px;background:#1f1f1f"></div>
<div class="a" style="left:2379px;top:0px;width:1px;height:1490px;background:#1f1f1f"></div>
<div class="a" style="left:0px;top:1488px;width:2380px;height:1px;background:#5a5a5a"></div>
<div class="a" style="left:0px;top:1489px;width:2380px;height:1px;background:#111"></div>
<div class="a" style="left:984px;top:0px;width:410px;height:2px;background:#646464"></div>
</body></html>
